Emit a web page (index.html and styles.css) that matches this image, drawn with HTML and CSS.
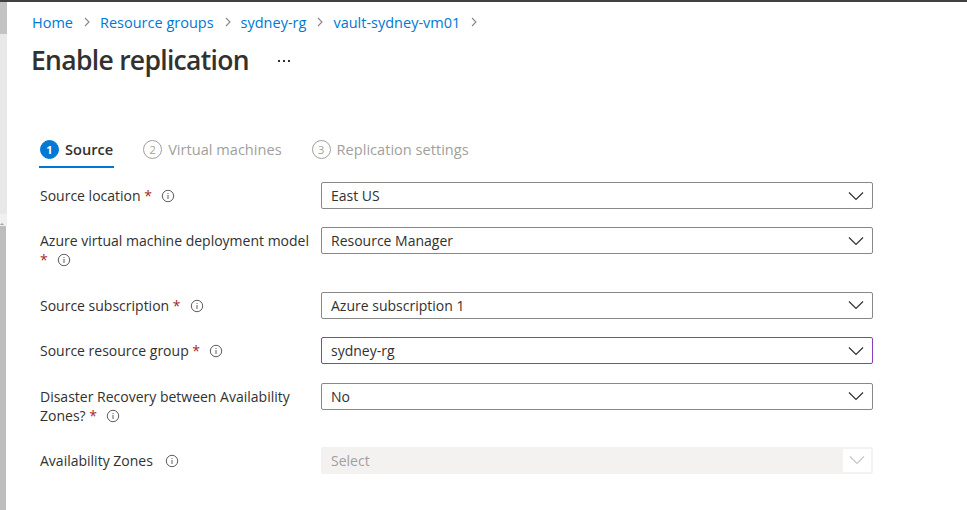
FILE: index.html
```html
<!DOCTYPE html>
<html lang="en">
<head>
<meta charset="utf-8">
<title>Enable replication</title>
<link rel="stylesheet" href="styles.css">
</head>
<body>
<div class="topbar"></div>
<div class="page">
  <div class="leftstrip">
    <div class="seg seg-a"></div>
    <div class="seg seg-b"></div>
    <div class="seg seg-c"><span class="tick"></span></div>
    <div class="seg seg-d"></div>
  </div>
  <main class="content">
    <nav class="crumbs">
      <a class="crumb">Home</a><span class="sep"><svg viewBox="0 0 8 12" width="8" height="12"><path d="M2 2 L6 6 L2 10" fill="none" stroke="#8a8886" stroke-width="1.1"/></svg></span>
      <a class="crumb">Resource groups</a><span class="sep"><svg viewBox="0 0 8 12" width="8" height="12"><path d="M2 2 L6 6 L2 10" fill="none" stroke="#8a8886" stroke-width="1.1"/></svg></span>
      <a class="crumb">sydney-rg</a><span class="sep"><svg viewBox="0 0 8 12" width="8" height="12"><path d="M2 2 L6 6 L2 10" fill="none" stroke="#8a8886" stroke-width="1.1"/></svg></span>
      <a class="crumb">vault-sydney-vm01</a><span class="sep"><svg viewBox="0 0 8 12" width="8" height="12"><path d="M2 2 L6 6 L2 10" fill="none" stroke="#8a8886" stroke-width="1.1"/></svg></span>
    </nav>
    <header class="title-row">
      <h1 class="title">Enable replication</h1>
      <span class="more"><i></i><i></i><i></i></span>
    </header>

    <div class="tabs">
      <div class="tab active"><span class="num">1</span><span class="tab-text">Source</span></div>
      <div class="tab"><span class="num">2</span><span class="tab-text">Virtual machines</span></div>
      <div class="tab"><span class="num">3</span><span class="tab-text">Replication settings</span></div>
    </div>

    <div class="form">
      <div class="row">
        <div class="label">Source location <span class="req">*</span><span class="info"><svg viewBox="0 0 14 14" width="14" height="14"><circle cx="7" cy="7" r="5.7" fill="none" stroke="#605e5c" stroke-width="1"/><rect x="6.5" y="6" width="1" height="4" fill="#605e5c"/><rect x="6.5" y="4" width="1" height="1" fill="#605e5c"/></svg></span></div>
        <div class="select"><span class="value">East US</span><span class="chev"><svg viewBox="0 0 16 10" width="16" height="10"><path d="M1 1.5 L8 8.5 L15 1.5" fill="none" stroke="#323130" stroke-width="1.2"/></svg></span></div>
      </div>
      <div class="row">
        <div class="label">Azure virtual machine deployment model <span class="req">*</span><span class="info"><svg viewBox="0 0 14 14" width="14" height="14"><circle cx="7" cy="7" r="5.7" fill="none" stroke="#605e5c" stroke-width="1"/><rect x="6.5" y="6" width="1" height="4" fill="#605e5c"/><rect x="6.5" y="4" width="1" height="1" fill="#605e5c"/></svg></span></div>
        <div class="select"><span class="value">Resource Manager</span><span class="chev"><svg viewBox="0 0 16 10" width="16" height="10"><path d="M1 1.5 L8 8.5 L15 1.5" fill="none" stroke="#323130" stroke-width="1.2"/></svg></span></div>
      </div>
      <div class="row">
        <div class="label">Source subscription <span class="req">*</span><span class="info"><svg viewBox="0 0 14 14" width="14" height="14"><circle cx="7" cy="7" r="5.7" fill="none" stroke="#605e5c" stroke-width="1"/><rect x="6.5" y="6" width="1" height="4" fill="#605e5c"/><rect x="6.5" y="4" width="1" height="1" fill="#605e5c"/></svg></span></div>
        <div class="select"><span class="value">Azure subscription 1</span><span class="chev"><svg viewBox="0 0 16 10" width="16" height="10"><path d="M1 1.5 L8 8.5 L15 1.5" fill="none" stroke="#323130" stroke-width="1.2"/></svg></span></div>
      </div>
      <div class="row">
        <div class="label">Source resource group <span class="req">*</span><span class="info"><svg viewBox="0 0 14 14" width="14" height="14"><circle cx="7" cy="7" r="5.7" fill="none" stroke="#605e5c" stroke-width="1"/><rect x="6.5" y="6" width="1" height="4" fill="#605e5c"/><rect x="6.5" y="4" width="1" height="1" fill="#605e5c"/></svg></span></div>
        <div class="select focused"><span class="value">sydney-rg</span><span class="chev"><svg viewBox="0 0 16 10" width="16" height="10"><path d="M1 1.5 L8 8.5 L15 1.5" fill="none" stroke="#323130" stroke-width="1.2"/></svg></span></div>
      </div>
      <div class="row">
        <div class="label">Disaster Recovery between Availability Zones? <span class="req">*</span><span class="info"><svg viewBox="0 0 14 14" width="14" height="14"><circle cx="7" cy="7" r="5.7" fill="none" stroke="#605e5c" stroke-width="1"/><rect x="6.5" y="6" width="1" height="4" fill="#605e5c"/><rect x="6.5" y="4" width="1" height="1" fill="#605e5c"/></svg></span></div>
        <div class="select"><span class="value">No</span><span class="chev"><svg viewBox="0 0 16 10" width="16" height="10"><path d="M1 1.5 L8 8.5 L15 1.5" fill="none" stroke="#323130" stroke-width="1.2"/></svg></span></div>
      </div>
      <div class="row">
        <div class="label">Availability Zones <span class="info"><svg viewBox="0 0 14 14" width="14" height="14"><circle cx="7" cy="7" r="5.7" fill="none" stroke="#605e5c" stroke-width="1"/><rect x="6.5" y="6" width="1" height="4" fill="#605e5c"/><rect x="6.5" y="4" width="1" height="1" fill="#605e5c"/></svg></span></div>
        <div class="select disabled"><span class="value">Select</span><span class="chev"><svg viewBox="0 0 16 10" width="16" height="10"><path d="M1 1.5 L8 8.5 L15 1.5" fill="none" stroke="#c8c6c4" stroke-width="1.1"/></svg></span></div>
      </div>
    </div>
  </main>
</div>
</body>
</html>
```

FILE: styles.css
```css
html, body {
  margin: 0;
  padding: 0;
  background: #ffffff;
  height: 100%;
  overflow: hidden;
}

body {
  font-family: "Segoe UI", "Open Sans", "Noto Sans", sans-serif;
  color: #323130;
}

.topbar {
  height: 2px;
  background: #404040;
}

.page {
  display: flex;
  height: 508px;
}

.leftstrip {
  width: 7px;
  flex: 0 0 7px;
  display: flex;
  flex-direction: column;
}

.seg-a { height: 32px; background: #c3c3c3; }
.seg-b { height: 180px; background: #e8e8e8; }
.seg-c {
  height: 12px;
  background: #f0f0f0;
  display: flex;
  align-items: flex-end;
  justify-content: flex-start;
}
.seg-c .tick {
  width: 0;
  height: 0;
  border-left: 2px solid transparent;
  border-right: 2px solid transparent;
  border-bottom: 2px solid #a0a0a0;
  margin-bottom: 1px;
}
.seg-d { flex: 1; background: #bdbdbd; width: 6px; }

.content {
  flex: 1;
  padding-left: 25px;
}

/* breadcrumb */
.crumbs {
  display: flex;
  align-items: center;
  margin-top: 10px;
  height: 20px;
  font-size: 14.5px;
}
.crumb {
  color: #0078d4;
  text-decoration: none;
}
.sep {
  display: flex;
  align-items: center;
  margin: 0 9px 0 10px;
}

/* title */
.title-row {
  display: flex;
  align-items: center;
  margin-top: 12px;
  height: 32px;
}
.title {
  margin: 0;
  font-size: 26.5px;
  letter-spacing: -0.7px;
  font-weight: 600;
  line-height: 32px;
  color: #323130;
  margin-left: -1px;
}
.more {
  display: flex;
  gap: 3px;
  margin-left: 29px;
  margin-top: 2px;
}
.more i {
  width: 2px;
  height: 2px;
  background: #323130;
  display: block;
}

/* tabs */
.tabs {
  display: flex;
  margin-top: 63px;
  margin-left: 7px;
}
.tab {
  display: flex;
  align-items: center;
  gap: 6px;
  height: 20px;
  padding: 0 1px 7px 1px;
  border-bottom: 2px solid transparent;
  margin-right: 28px;
  font-size: 14.6px;
  color: #a19f9d;
}
.tab .num {
  width: 17px;
  height: 17px;
  border-radius: 50%;
  border: 1px solid #a19f9d;
  font-size: 11px;
  display: flex;
  align-items: center;
  justify-content: center;
  color: #a19f9d;
}
.tab.active {
  border-bottom-color: #0078d4;
  color: #323130;
}
.tab.active .tab-text { font-weight: 600; }
.tab.active .num {
  background: #0078d4;
  border-color: #0078d4;
  color: #ffffff;
  font-weight: 700;
}

/* form */
.form {
  margin-top: 14px;
  margin-left: 8px;
  display: flex;
  flex-direction: column;
  gap: 18.4px;
}
.row {
  display: flex;
  align-items: flex-start;
}
.label {
  width: 276px;
  flex: 0 0 276px;
  margin-right: 5px;
  padding: 4px 0;
  line-height: 19px;
  font-size: 14px;
  color: #323130;
}
.req {
  color: #a4262c;
}
.info {
  display: inline-block;
  vertical-align: -2px;
  margin-left: 9px;
  line-height: 0;
}

.select {
  box-sizing: border-box;
  width: 552px;
  height: 27px;
  border: 1px solid #8a8886;
  border-radius: 2px;
  display: flex;
  align-items: center;
  justify-content: space-between;
  padding: 0 8px 0 9px;
  font-size: 14px;
  color: #323130;
}
.select .chev {
  display: flex;
  align-items: center;
  line-height: 0;
}
.select.focused {
  border-color: #8b3dba;
}
.select.disabled {
  background: #f3f2f1;
  border-color: #f3f2f1;
  color: #a19f9d;
  padding-right: 1px;
}
.select.disabled .chev {
  background: #ffffff;
  width: 28px;
  height: 23px;
  justify-content: center;
}
```
